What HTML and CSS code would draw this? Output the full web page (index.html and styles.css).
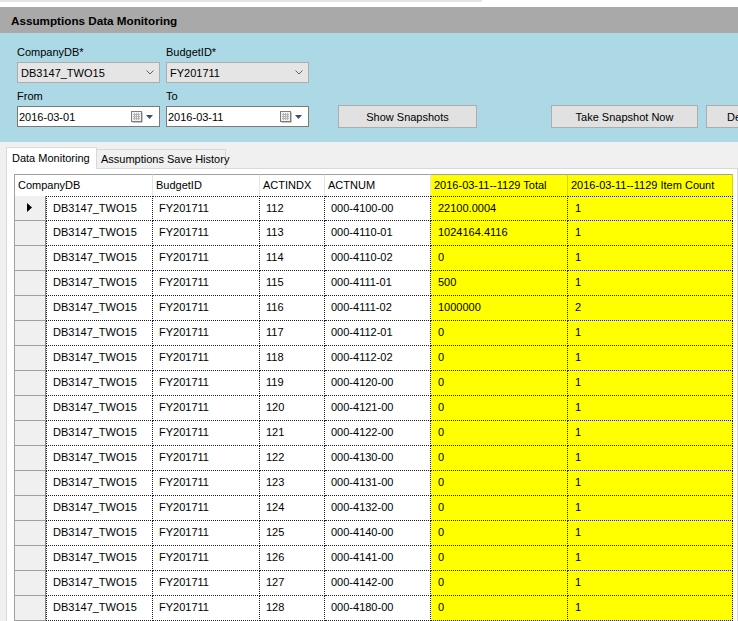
FILE: index.html
```html
<!DOCTYPE html>
<html>
<head>
<meta charset="utf-8">
<link rel="stylesheet" href="styles.css">
</head>
<body>
<div class="topstrip"><div class="topline"></div></div>
<div class="titlebar">Assumptions Data Monitoring</div>
<div class="form">
  <div class="frow">
    <div class="field">
      <div class="lbl">CompanyDB*</div>
      <div class="combo"><span>DB3147_TWO15</span><svg class="chev" width="8" height="5" viewBox="0 0 8 5"><polyline points="0.5,0.5 4,4 7.5,0.5" fill="none" stroke="#606060" stroke-width="1"/></svg></div>
    </div>
    <div class="field">
      <div class="lbl">BudgetID*</div>
      <div class="combo"><span>FY201711</span><svg class="chev" width="8" height="5" viewBox="0 0 8 5"><polyline points="0.5,0.5 4,4 7.5,0.5" fill="none" stroke="#606060" stroke-width="1"/></svg></div>
    </div>
  </div>
  <div class="frow frow2">
    <div class="field">
      <div class="lbl">From</div>
      <div class="date"><span>2016-03-01</span>
        <svg class="cal" width="12" height="12" viewBox="0 0 12 12"><rect x="1.5" y="1.5" width="10" height="10" fill="#8a8a8a"/><rect x="0.5" y="0.5" width="10" height="10" fill="#f2f2f2" stroke="#7c7c7c"/><path d="M2 3.5h7M2 5.5h7M2 7.5h7M3.5 2v7M5.5 2v7M7.5 2v7" stroke="#b4b4b4" stroke-width="1"/></svg>
        <svg class="tri" width="7" height="4" viewBox="0 0 7 4"><polygon points="0,0 7,0 3.5,4" fill="#3a4d72"/></svg>
      </div>
    </div>
    <div class="field">
      <div class="lbl">To</div>
      <div class="date"><span>2016-03-11</span>
        <svg class="cal" width="12" height="12" viewBox="0 0 12 12"><rect x="1.5" y="1.5" width="10" height="10" fill="#8a8a8a"/><rect x="0.5" y="0.5" width="10" height="10" fill="#f2f2f2" stroke="#7c7c7c"/><path d="M2 3.5h7M2 5.5h7M2 7.5h7M3.5 2v7M5.5 2v7M7.5 2v7" stroke="#b4b4b4" stroke-width="1"/></svg>
        <svg class="tri" width="7" height="4" viewBox="0 0 7 4"><polygon points="0,0 7,0 3.5,4" fill="#3a4d72"/></svg>
      </div>
    </div>
    <div class="btn btn-show">Show Snapshots</div>
    <div class="btn btn-take">Take Snapshot Now</div>
    <div class="btn btn-del">Delete Snapshot</div>
  </div>
</div>
<div class="tabsarea">
  <div class="tabstrip">
    <div class="tab sel">Data Monitoring</div>
    <div class="tab">Assumptions Save History</div>
  </div>
  <div class="panel">
    <div class="grid">
      <div class="h h0">CompanyDB</div>
      <div class="h">BudgetID</div>
      <div class="h">ACTINDX</div>
      <div class="h">ACTNUM</div>
      <div class="h hy">2016-03-11--1129 Total</div>
      <div class="h hy">2016-03-11--1129 Item Count</div>
    </div>
    <div class="grid rows" id="rows"></div>
  </div>
</div>
<script src="app.js"></script>
</body>
</html>
```
FILE: app.js
```js
var data = [
  ["112","000-4100-00","22100.0004","1"],
  ["113","000-4110-01","1024164.4116","1"],
  ["114","000-4110-02","0","1"],
  ["115","000-4111-01","500","1"],
  ["116","000-4111-02","1000000","2"],
  ["117","000-4112-01","0","1"],
  ["118","000-4112-02","0","1"],
  ["119","000-4120-00","0","1"],
  ["120","000-4121-00","0","1"],
  ["121","000-4122-00","0","1"],
  ["122","000-4130-00","0","1"],
  ["123","000-4131-00","0","1"],
  ["124","000-4132-00","0","1"],
  ["125","000-4140-00","0","1"],
  ["126","000-4141-00","0","1"],
  ["127","000-4142-00","0","1"],
  ["128","000-4180-00","0","1"]
];
var html = "";
data.forEach(function (d, i) {
  var f = i === 0 ? " r0" : "";
  html += '<div class="rh' + f + '">' + (i === 0 ? '<svg width="5" height="9" viewBox="0 0 5 9"><polygon points="0,0 5,4.5 0,9" fill="#000"/></svg>' : '') + '</div>';
  html += '<div class="c first' + f + '">DB3147_TWO15</div>';
  html += '<div class="c' + f + '">FY201711</div>';
  html += '<div class="c' + f + '">' + d[0] + '</div>';
  html += '<div class="c' + f + '">' + d[1] + '</div>';
  html += '<div class="c y' + f + '">' + d[2] + '</div>';
  html += '<div class="c y' + f + '">' + d[3] + '</div>';
});
document.getElementById("rows").innerHTML = html;
```
FILE: styles.css
```css
html, body {
  margin: 0;
  padding: 0;
}
body {
  width: 738px;
  height: 621px;
  overflow: hidden;
  font-family: "Liberation Sans", Arial, sans-serif;
  font-size: 11px;
  color: #000;
  background: #f0f0f0;
}
.topstrip {
  height: 7px;
  background: #fff;
}
.topline {
  width: 482px;
  height: 2px;
  background: #e4e4e4;
}
.titlebar {
  height: 26px;
  background: #a9a9a9;
  display: flex;
  align-items: center;
  padding-left: 11px;
  font-weight: bold;
  font-size: 11.7px;
}
.form {
  height: 109px;
  box-sizing: border-box;
  background: #add8e6;
  padding: 13px 0 0 17px;
  white-space: nowrap;
}
.frow {
  display: flex;
  gap: 6px;
  align-items: flex-end;
}
.frow2 {
  margin-top: 7px;
}
.field {
  width: 143px;
  flex: none;
  display: flex;
  flex-direction: column;
  gap: 3px;
}
.lbl {
  height: 13px;
  line-height: 13px;
}
.combo {
  height: 21px;
  box-sizing: border-box;
  border: 1px solid #adadad;
  background: #e5e5e5;
  display: flex;
  align-items: center;
  padding-left: 3px;
}
.chev {
  margin-left: auto;
  margin-right: 5px;
}
.date {
  height: 21px;
  box-sizing: border-box;
  border: 1px solid #7a7a7a;
  background: #fff;
  display: flex;
  align-items: center;
  padding-left: 1px;
}
.cal {
  margin-left: auto;
  margin-top: 1px;
}
.tri {
  margin-left: 3px;
  margin-right: 6px;
}
.btn {
  flex: none;
  height: 23px;
  box-sizing: border-box;
  border: 1px solid #adadad;
  background: #e1e1e1;
  display: flex;
  align-items: center;
  justify-content: center;
  margin-bottom: -1px;
}
.btn-show {
  width: 139px;
  margin-left: 23px;
}
.btn-take {
  width: 147px;
  margin-left: 68px;
}
.btn-del {
  width: 122px;
  margin-left: 2px;
  justify-content: flex-start;
  padding-left: 20px;
}
.tabsarea {
  padding-top: 5px;
}
.tabstrip {
  display: flex;
  align-items: flex-end;
  padding-left: 6px;
  height: 21px;
  position: relative;
  z-index: 1;
}
.tab {
  box-sizing: border-box;
  height: 19px;
  border: 1px solid #d9d9d9;
  border-bottom: none;
  background: #f0f0f0;
  display: flex;
  align-items: center;
  padding-left: 4px;
  white-space: nowrap;
}
.tab.sel {
  height: 22px;
  margin-bottom: -1px;
  background: #fff;
  padding-left: 5px;
  padding-bottom: 2px;
  width: 91px;
}
.tab:not(.sel) {
  width: 129px;
  border-left: none;
}
.panel {
  margin-left: 6px;
  border: 1px solid #d9d9d9;
  border-bottom: none;
  background: #fff;
  padding: 5px 0 0 7px;
  height: 460px;
}
.grid {
  display: grid;
  grid-template-columns: 32px 107px 107px 65px 106px 137px 165px;
  grid-auto-rows: 25px;
  width: 719px;
}
.grid:first-child {
  grid-auto-rows: 22px;
}
.h {
  box-sizing: border-box;
  border-top: 1px solid #a0a0a0;
  border-right: 1px solid #e3e3e3;
  background: #fff;
  display: flex;
  align-items: center;
  padding-left: 3px;
  padding-bottom: 1px;
  white-space: nowrap;
  overflow: hidden;
}
.h0 {
  grid-column: 1 / span 2;
  border-left: 1px solid #a0a0a0;
  padding-left: 3px;
}
.hy {
  background: #ffff00;
  border-right: 1px solid #d6d600;
}
.rh {
  box-sizing: border-box;
  background: #f0f0f0;
  border-left: 1px solid #a0a0a0;
  border-right: 1px solid #8c8c8c;
  border-bottom: 1px solid #a0a0a0;
  display: flex;
  align-items: center;
  padding-left: 12px;
  padding-bottom: 2px;
}
.c {
  box-sizing: border-box;
  background: #fff;
  border-right: 1px dotted #222;
  border-bottom: 1px dotted #222;
  display: flex;
  align-items: center;
  padding-left: 6px;
  padding-bottom: 2px;
  white-space: nowrap;
  overflow: hidden;
}
.c.first {
  border-left: 1px dotted #222;
}
.c.r0 {
  border-top: 1px dotted #222;
}
.c.y {
  background: #ffff00;
  padding-left: 7px;
}
```
